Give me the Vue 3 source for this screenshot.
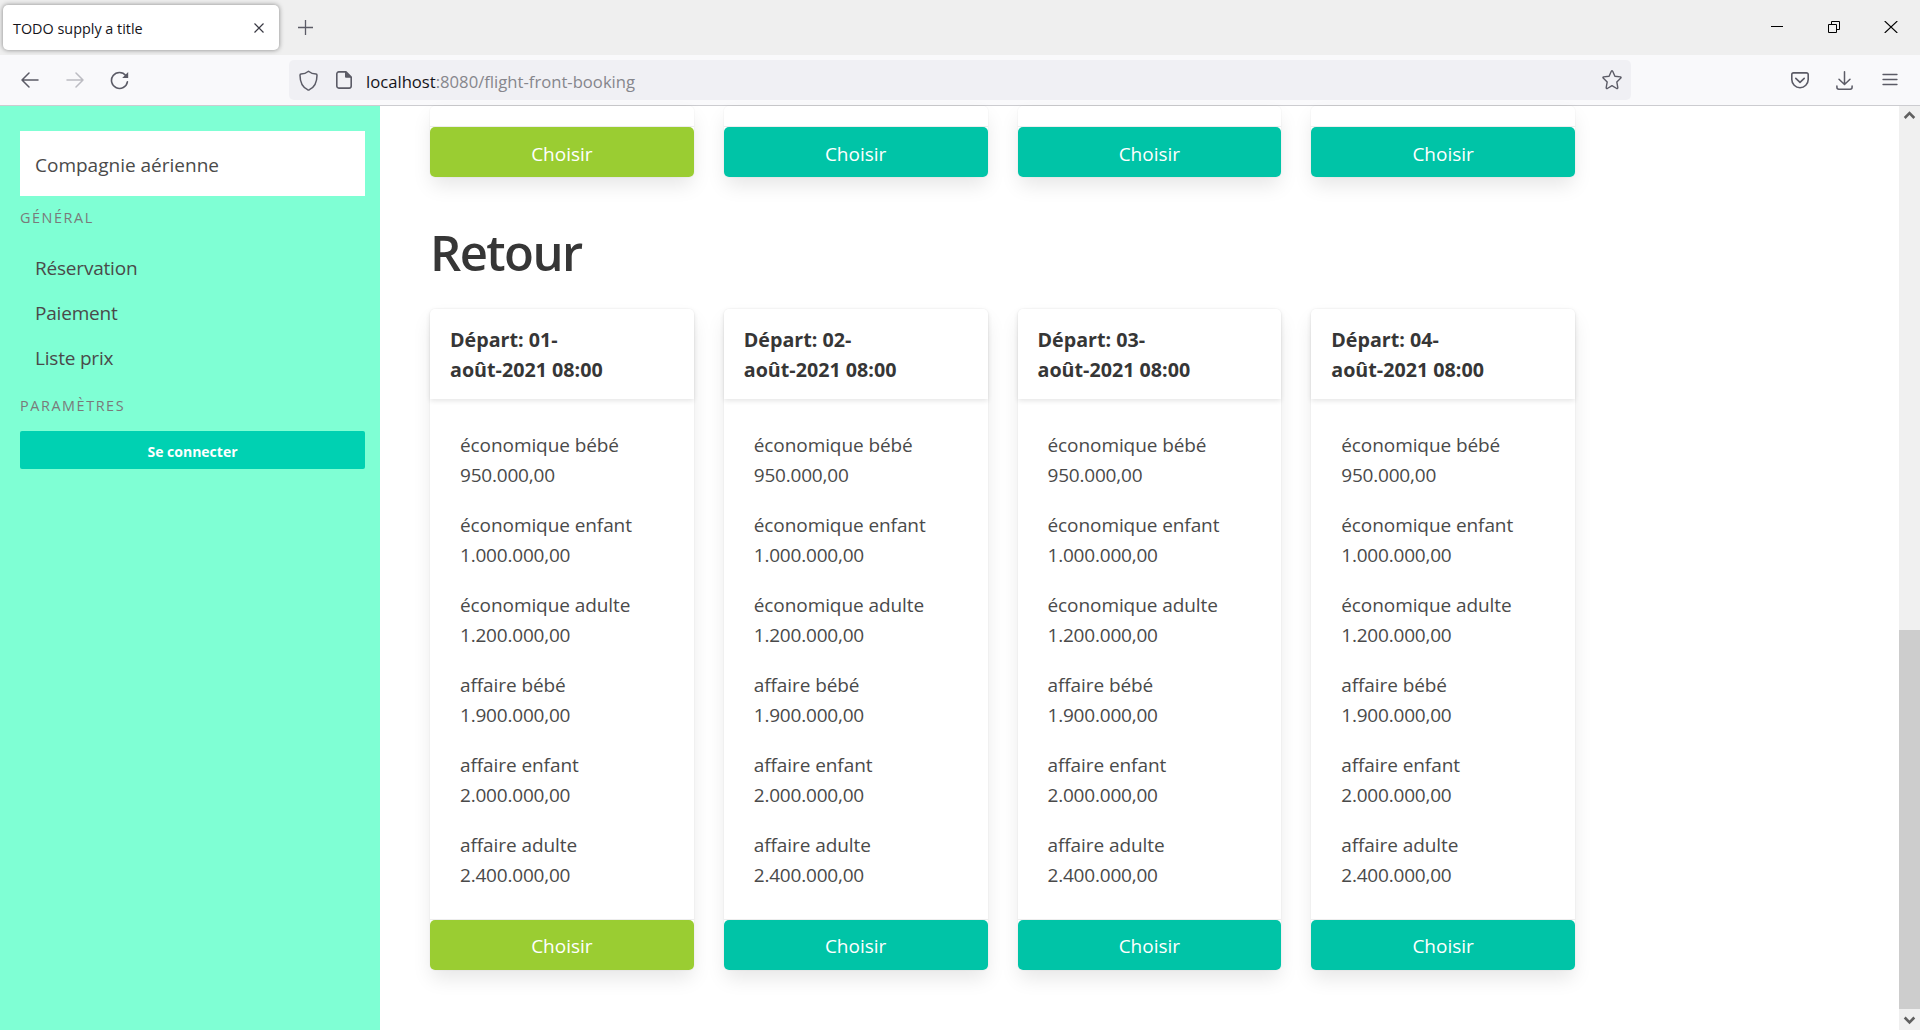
<script setup>
const days = ['01', '02', '03', '04']
const fares = [
  ['économique bébé', '950.000,00'],
  ['économique enfant', '1.000.000,00'],
  ['économique adulte', '1.200.000,00'],
  ['affaire bébé', '1.900.000,00'],
  ['affaire enfant', '2.000.000,00'],
  ['affaire adulte', '2.400.000,00'],
]
const menu = ['Réservation', 'Paiement', 'Liste prix']
</script>

<template>
  <div class="window">
    <header class="tabbar">
      <div class="tab">
        <span>TODO supply a title</span>
        <svg width="10" height="10" viewBox="0 0 10 10" fill="none" stroke="#3a3a44" stroke-width="1.2"><path d="M.5 .5l9 9M9.500 .5l-9 9" /></svg>
      </div>
      <svg class="newtab" width="15" height="15" viewBox="0 0 15 15" fill="none" stroke="#5b5b66" stroke-width="1.3"><path d="M7.500 0v15M0 7.500h15" /></svg>
      <div class="controls">
        <svg width="12" height="14" viewBox="0 0 12 14" fill="none" stroke="#000"><path d="M0 6.500h12" /></svg>
        <svg width="12" height="12" viewBox="0 0 12 12" fill="none" stroke="#000"><path d="M.5 3.500h8v8h-8zM3.500 3.500v-3h8v8h-3" /></svg>
        <svg width="14" height="12" viewBox="0 0 14 12" fill="none" stroke="#000" stroke-width="1.1"><path d="M.7 0l12.600 12M13.300 0L.7 12" /></svg>
      </div>
    </header>

    <div class="toolbar">
      <div class="nav">
        <svg width="18" height="16" viewBox="0 0 18 16" fill="none" stroke="#5b5b66" stroke-width="1.5" stroke-linecap="round" stroke-linejoin="round"><path d="M17 8H1M8 1L1 8l7 7" /></svg>
        <svg width="18" height="16" viewBox="0 0 18 16" fill="none" stroke="#bcbcc2" stroke-width="1.5" stroke-linecap="round" stroke-linejoin="round"><path d="M1 8h16M10 1l7 7-7 7" /></svg>
        <svg width="19" height="19" viewBox="0 0 19 19" fill="none" stroke="#5b5b66" stroke-width="1.6" stroke-linecap="round"><path d="M15.800 4.500A8 8 0 1 0 17.400 10.800" /><path d="M18.200 1v6h-6z" fill="#5b5b66" stroke="none" /></svg>
      </div>
      <div class="url">
        <svg width="19" height="21" viewBox="0 0 19 21" fill="none" stroke="#5b5b66" stroke-width="1.5" stroke-linejoin="round"><path d="M9.500 1.200C7.500 2.900 4.300 4 2 4.100q-1 .1-1 1.100c0 6 2 11.700 7.600 14.500q.9.400 1.800 0C16 16.900 18 11.200 18 5.200q0-1-1-1.100C14.700 4 11.500 2.900 9.500 1.200z" /></svg>
        <svg class="doc" width="16" height="18" viewBox="0 0 16 18" fill="none" stroke="#5b5b66" stroke-width="1.6" stroke-linejoin="round"><path d="M10 .9H2.800A2 2 0 0 0 .8 2.900v12.200a2 2 0 0 0 2 2h10.400a2 2 0 0 0 2-2V6z" /><path d="M9.500 .9v5.300h5.500z" fill="#5b5b66" stroke-width="1" /></svg>
        <span class="address"><b>localhost</b>:8080/flight-front-booking</span>
        <svg class="star" width="20" height="20" viewBox="0 0 20 20" fill="none" stroke="#5b5b66" stroke-width="1.4" stroke-linejoin="round"><path d="M9.300 1.300q.7-1 1.400 0l2.200 4.900 5.500.7q1.100.3.4 1.200l-4 3.800 1 5.800q0 1.200-1.100.8L10 15.700l-4.700 2.800q-1.100.4-1.100-.8l1-5.800-4-3.800q-.7-.9.4-1.200l5.500-.7z" /></svg>
      </div>
      <div class="actions">
        <svg width="18" height="17" viewBox="0 0 18 17" fill="none" stroke="#5b5b66" stroke-width="1.6" stroke-linecap="round" stroke-linejoin="round"><path d="M2.500 .9h13a1.700 1.700 0 0 1 1.700 1.700V7.500a8.200 8.200 0 0 1-16.400 0V2.600A1.700 1.700 0 0 1 2.500 .9z" /><path d="M4.800 6.300L9 10.300l4.200-4" /></svg>
        <svg width="17" height="19" viewBox="0 0 17 19" fill="none" stroke="#5b5b66" stroke-width="1.5" stroke-linecap="round" stroke-linejoin="round"><path d="M8.500 .8v12.500M3 8.200l5.500 5.300L14 8.200" /><path d="M.9 14.900v1.400q0 1.900 1.900 1.900h11.400q1.900 0 1.900-1.900v-1.400" /></svg>
        <svg width="16" height="14" viewBox="0 0 16 14" fill="none" stroke="#5b5b66" stroke-width="1.3" stroke-linecap="round"><path d="M1 1.500h14M1 6.500h14M1 11.500h14" /></svg>
      </div>
    </div>

    <div class="page">
      <aside class="sidebar">
        <div class="brand">Compagnie aérienne</div>
        <p class="label">GÉNÉRAL</p>
        <ul class="menu">
          <li v-for="item in menu" :key="item">{{ item }}</li>
        </ul>
        <p class="label second">PARAMÈTRES</p>
        <button class="login">Se connecter</button>
      </aside>

      <main class="main">
        <section class="row previous">
          <div v-for="(d, i) in days" :key="d" class="card">
            <div class="tail"></div>
            <button class="choose" :class="{ selected: i === 0 }">Choisir</button>
          </div>
        </section>
        <h1>Retour</h1>
        <section class="row">
          <article v-for="(d, i) in days" :key="d" class="card">
            <header class="card-head">Départ: {{ d }}-<br />août-2021 08:00</header>
            <div class="card-body">
              <p v-for="f in fares" :key="f[0]">{{ f[0] }}<br /><span class="price">{{ f[1] }}</span></p>
            </div>
            <button class="choose" :class="{ selected: i === 0 }">Choisir</button>
          </article>
        </section>
      </main>

      <div class="scrollbar">
        <svg width="21" height="21" viewBox="0 0 21 21" fill="none" stroke="#606060" stroke-width="2.600"><path d="M5.700 12l4.800-4.800 4.800 4.800" /></svg>
        <div class="thumb"></div>
        <svg width="21" height="21" viewBox="0 0 21 21" fill="none" stroke="#606060" stroke-width="2.600"><path d="M5.700 8.500l4.800 4.800 4.800-4.800" /></svg>
      </div>
    </div>
  </div>
</template>

<style>
body { margin: 0; overflow: hidden; }
</style>

<style scoped>
* { box-sizing: border-box; }
.window {
  height: 1030px;
  display: flex;
  flex-direction: column;
  overflow: hidden;
  background: #fff;
  color: #4a4a4a;
  font: 19px/30px "Open Sans", "Noto Sans", sans-serif;
}
svg { display: block; flex: none; }
p, ul, h1 { margin: 0; padding: 0; }
button { display: block; width: 100%; border: 0; padding: 0; font-family: inherit; color: #fff; }

.tabbar { height: 55px; flex: none; display: flex; align-items: center; background: #efefef; padding: 0 22px 0 3px; }
.tab {
  width: 276px; height: 45px; padding: 0 15px 0 10px;
  display: flex; align-items: center; justify-content: space-between;
  background: #fff; border-radius: 5px; box-shadow: 0 0 5px rgba(0, 0, 0, .45);
  font-size: 14.4px; color: #15141a;
}
.tab span { padding-top: 2px; }
.newtab { margin-left: 19px; }
.controls { margin-left: auto; display: flex; align-items: center; gap: 45px; }
.controls svg:nth-child(2) { margin-right: -1px; }
.controls { transform: translate(0, -1px); }
.controls svg:first-child { margin-right: 0; }

.toolbar { height: 51px; flex: none; display: flex; align-items: center; background: #f9f9fb; border-bottom: 1px solid #ccccd0; padding-right: 22px; }
.nav { width: 289px; display: flex; align-items: center; gap: 27px; padding-left: 21px; }
.nav svg:last-child { margin-left: -1px; }
.url { width: 1342px; height: 40px; display: flex; align-items: center; background: #f0f0f4; border-radius: 5px; padding: 0 9px 0 10px; }
.doc { margin-left: 18px; }
.address { margin-left: 14px; font-size: 16.650px; color: #86868c; padding-top: 3px; }
.address b { font-weight: 400; color: #15141a; }
.star { margin-left: auto; }
.actions { margin-left: auto; display: flex; align-items: center; gap: 28px; }
.actions svg:nth-child(2) { margin: 0 1px 0 -1px; }

.page { flex: 1; min-height: 0; display: flex; }
.sidebar { width: 380px; flex: none; background: #7fffd4; padding: 25px 15px 0 20px; }
.brand { height: 65px; background: #fff; padding: 19px 15px 0; }
.label { margin-top: 10px; height: 23px; line-height: 23px; font-size: 14.400px; letter-spacing: 1.58px; color: #7a7a7a; }
.menu { list-style: none; margin-top: 17px; }
.menu li { height: 45px; line-height: 45px; padding-left: 15px; letter-spacing: -.2px; }
.label.second { margin-top: 13px; }
.login { margin-top: 14px; height: 38px; line-height: 42px; border-radius: 2px; background: #00d1b2; font-size: 14px; font-weight: 700; }

.main { flex: 1; padding-left: 50px; }
.row { width: 1145px; display: flex; gap: 30px; }
.card { flex: 1; background: #fff; border-radius: 5px; box-shadow: 0 10px 20px -2px rgba(10, 10, 10, .1), 0 0 0 1px rgba(10, 10, 10, .02); }
.tail { height: 21px; border-bottom: 1px solid #ededed; }
h1 { margin-top: 45px; height: 60px; line-height: 60px; font-size: 49px; font-weight: 600; letter-spacing: -1.6px; color: #363636; }
h1 + .row { margin-top: 27px; }
.card-head { height: 90px; padding: 16px 20px 14px; font-size: 19.700px; font-weight: 700; color: #363636; box-shadow: 0 2px 5px rgba(10, 10, 10, .1); border-radius: 5px 5px 0 0; }
.card-body { height: 521px; padding: 31px 30px 29px; border-bottom: 1px solid #ededed; letter-spacing: -.08px; }
.card-body p { height: 60px; margin-bottom: 20px; }
.price { letter-spacing: -.2px; }
.choose { height: 50px; line-height: 52px; font-size: 19px; background: #00c4a7; border-radius: 5px; }
.previous .choose { line-height: 54px; }
.choose.selected { background: #9acd32; }

.scrollbar { width: 21px; flex: none; display: flex; flex-direction: column; background: #f0f0f0; }
.thumb { height: 379px; margin-top: auto; background: #cdcdcd; }
</style>
